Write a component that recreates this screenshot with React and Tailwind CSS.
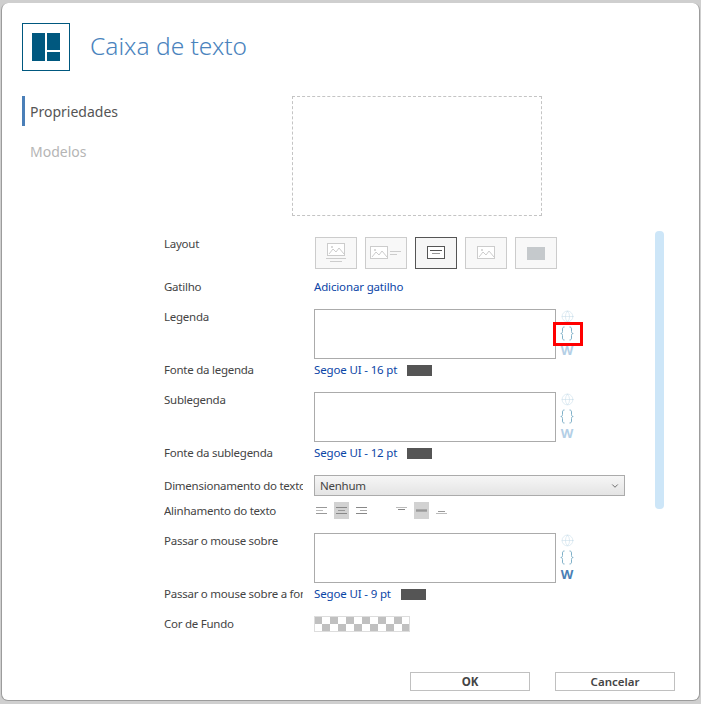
import { ChevronDown, Globe } from "lucide-react";

const fontStack = "font-['Noto_Sans','Open_Sans',sans-serif]";

const Label = ({ children, className = "" }) => (
  <div className={`w-[139px] shrink-0 overflow-hidden whitespace-nowrap text-[11.5px] leading-4 tracking-[-0.25px] text-[#444] ${className}`}>
    {children}
  </div>
);

const Tile = ({ active, children }) => (
  <div
    className={`flex h-[32px] w-[42px] items-center justify-center border ${
      active ? "border-[#555] bg-[#f6f6f6]" : "border-[#ccc] bg-[#f8f8f8]"
    }`}
  >
    {children}
  </div>
);

const Picture = () => (
  <>
    <rect x="0.5" y="0.5" width="17" height="12" fill="#fff" stroke="#ccc" />
    <path d="M2 11l4-5 3 3 3-4 5 6" fill="none" stroke="#ccc" />
    <circle cx="5" cy="4" r="1" fill="#ccc" />
  </>
);

const SideIcons = ({ strong }) => (
  <div className="ml-[4px] flex w-[14px] flex-col items-center pt-[1px]">
    <Globe className="h-[13px] w-[13px] text-[#c6dce8]" strokeWidth={1} />
    <svg className="mt-[3px] shrink-0" width="14" height="15" viewBox="0 0 14 15" fill="none" stroke="#7fb0c8">
      <path d="M4.5 1C3 1 2.5 1.7 2.5 3v2.5c0 1.2-.6 2-1.7 2 1.1 0 1.7.8 1.7 2V12c0 1.3.5 2 2 2" />
      <path d="M9.5 1c1.5 0 2 .7 2 2v2.5c0 1.2.6 2 1.7 2-1.1 0-1.7.8-1.7 2V12c0 1.3-.5 2-2 2" />
    </svg>
    <span className={`mt-[1px] text-[13px] font-bold leading-[16px] ${strong ? "text-[#4a7fb5]" : "text-[#b4cfe6]"}`}>W</span>
  </div>
);

const TextBox = ({ label, strong }) => (
  <div className="flex">
    <Label>{label}</Label>
    <div className="ml-[11px] h-[50px] w-[242px] border border-[#ababab] bg-white" />
    <SideIcons strong={strong} />
  </div>
);

const LinkText = ({ children }) => (
  <a className="ml-[11px] whitespace-nowrap text-[11.5px] leading-4 tracking-[-0.15px] text-[#0b45a6]">{children}</a>
);

const FontRow = ({ label, font }) => (
  <div className="flex h-[16px] items-center">
    <Label>{label}</Label>
    <LinkText>{font}</LinkText>
    <div className="ml-[10px] h-[11px] w-[25px] bg-[#555]" />
  </div>
);

const AlignIcon = ({ lines, active }) => (
  <div className={`flex h-[17px] w-[15px] items-center justify-center ${active ? "bg-[#d2d2d2]" : ""}`}>
    <svg width="11" height="9" viewBox="0 0 11 9">
      {lines.map(([x, y, w, c], i) => (
        <rect key={i} x={x} y={y} width={w} height="1" fill={c} />
      ))}
    </svg>
  </div>
);

export default function App() {
  return (
    <div className={`h-[704px] w-[701px] overflow-hidden bg-[#cfcfcf] pb-[3px] pl-[1px] pr-[1px] pt-[3px] ${fontStack}`}>
      <div className="relative flex h-full flex-col rounded-[7px] border-r border-b border-l border-[#9c9c9c] bg-white">
        <header className="flex items-center pl-[20px] pt-[20px]">
          <div className="flex h-[48px] w-[48px] items-center justify-center border border-[#00587f]">
            <div className="grid h-[28px] w-[28px] grid-cols-2 grid-rows-[17px_9px] gap-[2px]">
              <div className="row-span-2 bg-[#00587f]" />
              <div className="bg-[#00587f]" />
              <div className="bg-[#00587f]" />
            </div>
          </div>
          <h1 className="mb-[2px] ml-[20px] whitespace-nowrap text-[24.5px] font-light leading-8 text-[#4a83bd]">Caixa de texto</h1>
        </header>

        <div className="flex pt-[25px]">
          <nav className="w-[290px] pl-[20px]">
            <div className="flex h-[30px] items-center border-l-[3px] border-[#4a7fb8] pl-[5px] text-[14px] text-[#555]">
              Propriedades
            </div>
            <div className="mt-[10px] flex h-[30px] items-center pl-[8px] text-[14px] text-[#b5b5b5]">Modelos</div>
          </nav>
          <div className="h-[120px] w-[250px] border border-dashed border-[#c4c4c4]" />
        </div>

        <div className="flex pl-[162px] pt-[21px]">
          <div className="flex w-[480px] flex-col">
            <div className="flex">
              <Label className="-mt-px">Layout</Label>
              <div className="ml-[12px] flex gap-[8px]">
                <Tile>
                  <svg width="20" height="22" viewBox="0 0 20 22">
                    <g transform="translate(1 1)"><Picture /></g>
                    <path d="M0 16.5h20M4 19.5h12" stroke="#ccc" />
                  </svg>
                </Tile>
                <Tile>
                  <svg width="32" height="14" viewBox="0 0 32 14">
                    <Picture />
                    <path d="M20 5.5h11M20 8.5h7" stroke="#ccc" />
                  </svg>
                </Tile>
                <Tile active>
                  <svg width="18" height="14" viewBox="0 0 18 14">
                    <rect x="0.5" y="0.5" width="17" height="12" fill="#fff" stroke="#555" />
                    <path d="M3 4.5h12" stroke="#555" />
                    <path d="M5 7.5h8" stroke="#999" />
                  </svg>
                </Tile>
                <Tile>
                  <svg width="18" height="14" viewBox="0 0 18 14"><Picture /></svg>
                </Tile>
                <Tile>
                  <div className="h-[13px] w-[18px] bg-[#c5c9cc]" />
                </Tile>
              </div>
            </div>

            <div className="mt-[10px] flex h-[16px] items-center">
              <Label>Gatilho</Label>
              <LinkText>Adicionar gatilho</LinkText>
            </div>

            <div className="mt-[14px]">
              <TextBox label="Legenda" />
            </div>
            <div className="mt-[3px]">
              <FontRow label="Fonte da legenda" font="Segoe UI - 16 pt" />
            </div>
            <div className="mt-[14px]">
              <TextBox label="Sublegenda" />
            </div>
            <div className="mt-[3px]">
              <FontRow label="Fonte da sublegenda" font="Segoe UI - 12 pt" />
            </div>

            <div className="mt-[14px] flex h-[21px] items-center">
              <Label>Dimensionamento do texto</Label>
              <div className="ml-[11px] flex h-[21px] w-[311px] items-center justify-between border border-[#ababab] bg-gradient-to-b from-[#f6f6f6] to-[#e4e4e4] pl-[5px] pr-[4px] text-[11.5px] tracking-[-0.25px] text-[#444]">
                Nenhum
                <ChevronDown className="h-[10px] w-[10px] text-[#555]" strokeWidth={2} />
              </div>
            </div>

            <div className="mt-[6px] flex h-[17px] items-center">
              <Label>Alinhamento do texto</Label>
              <div className="ml-[11px] flex gap-[5px]">
                <AlignIcon lines={[[0, 1, 11, "#999"], [0, 4, 7, "#bbb"], [0, 7, 11, "#999"]]} />
                <AlignIcon active lines={[[0, 1, 11, "#888"], [2, 4, 7, "#999"], [0, 7, 11, "#888"]]} />
                <AlignIcon lines={[[0, 1, 11, "#888"], [4, 4, 7, "#aaa"], [0, 7, 11, "#888"]]} />
                <div className="w-[15px]" />
                <AlignIcon lines={[[0, 1, 11, "#bbb"], [2, 3, 7, "#888"]]} />
                <AlignIcon active lines={[[0, 3, 11, "#aaa"], [0, 4, 11, "#999"], [0, 5, 11, "#aaa"]]} />
                <AlignIcon lines={[[2, 5, 7, "#999"], [0, 7, 11, "#bbb"]]} />
              </div>
            </div>

            <div className="mt-[14px]">
              <TextBox label="Passar o mouse sobre" strong />
            </div>
            <div className="mt-[3px]">
              <FontRow label="Passar o mouse sobre a fonte" font="Segoe UI - 9 pt" />
            </div>

            <div className="mt-[14px] flex h-[16px] items-center">
              <Label>Cor de Fundo</Label>
              <div className="ml-[11px] h-[16px] w-[96px] border border-[#ddd] bg-[repeating-conic-gradient(#fff_0_25%,#c0c0c0_0_50%)] bg-[length:16px_16px] bg-origin-border" />
            </div>
          </div>
          <div className="ml-[11px] mt-[-6px] h-[278px] w-[9px] rounded-[4px] bg-[#cde6f8]" />
        </div>

        <footer className="mt-auto flex justify-end gap-[25px] pb-[9px] pr-[24px]">
          <button type="button" className="h-[19px] w-[120px] border border-[#c0c0c0] bg-white text-[11.5px] font-bold leading-none text-[#444]">OK</button>
          <button type="button" className="h-[19px] w-[120px] border border-[#c0c0c0] bg-white text-[11.5px] font-semibold leading-none text-[#444]">Cancelar</button>
        </footer>

        <div className="absolute left-[551px] top-[319px] h-[24px] w-[30px] border-[3px] border-[#f00]" />
      </div>
    </div>
  );
}
